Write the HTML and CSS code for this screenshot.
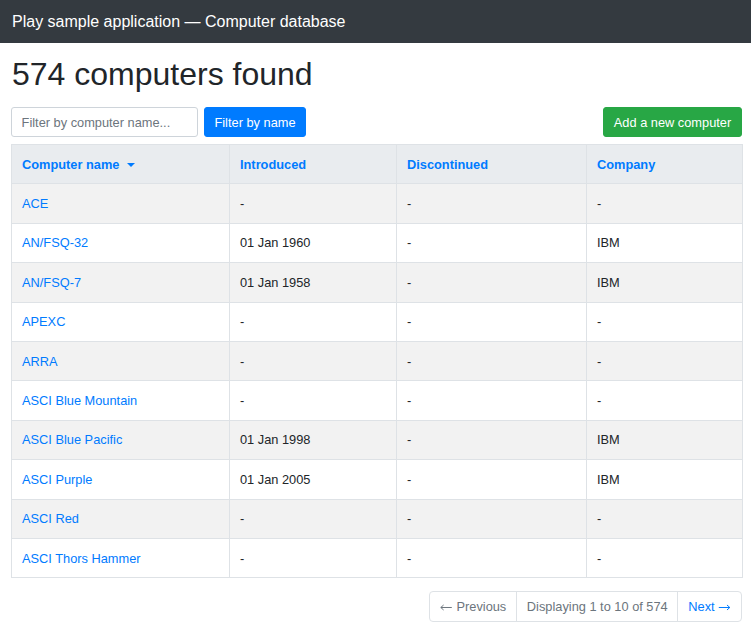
FILE: index.html
```html
<!DOCTYPE html>
<html lang="en">
<head>
<meta charset="utf-8">
<title>Computers database</title>
<link rel="stylesheet" href="styles.css">
</head>
<body>
<header class="topbar">
  <a class="brand" href="#">Play sample application — Computer database</a>
</header>
<main class="container">
  <h1 class="title">574 computers found</h1>
  <div class="actions">
    <form class="filter">
      <input class="search" type="search" placeholder="Filter by computer name...">
      <button class="btn btn-primary" type="button">Filter by name</button>
    </form>
    <a class="btn btn-success" href="#">Add a new computer</a>
  </div>
  <table class="computers">
    <colgroup>
      <col class="c1"><col class="c2"><col class="c3"><col class="c4">
    </colgroup>
    <thead>
      <tr>
        <th><a href="#">Computer name</a><span class="caret"></span></th>
        <th><a href="#">Introduced</a></th>
        <th><a href="#">Discontinued</a></th>
        <th><a href="#">Company</a></th>
      </tr>
    </thead>
    <tbody>
      <tr><td><a href="#">ACE</a></td><td>-</td><td>-</td><td>-</td></tr>
      <tr><td><a href="#">AN/FSQ-32</a></td><td>01 Jan 1960</td><td>-</td><td>IBM</td></tr>
      <tr><td><a href="#">AN/FSQ-7</a></td><td>01 Jan 1958</td><td>-</td><td>IBM</td></tr>
      <tr><td><a href="#">APEXC</a></td><td>-</td><td>-</td><td>-</td></tr>
      <tr><td><a href="#">ARRA</a></td><td>-</td><td>-</td><td>-</td></tr>
      <tr><td><a href="#">ASCI Blue Mountain</a></td><td>-</td><td>-</td><td>-</td></tr>
      <tr><td><a href="#">ASCI Blue Pacific</a></td><td>01 Jan 1998</td><td>-</td><td>IBM</td></tr>
      <tr><td><a href="#">ASCI Purple</a></td><td>01 Jan 2005</td><td>-</td><td>IBM</td></tr>
      <tr><td><a href="#">ASCI Red</a></td><td>-</td><td>-</td><td>-</td></tr>
      <tr><td><a href="#">ASCI Thors Hammer</a></td><td>-</td><td>-</td><td>-</td></tr>
    </tbody>
  </table>
  <nav class="pager">
    <ul class="pagination">
      <li class="page disabled"><span><svg class="arrow" viewBox="0 0 12.8 8" aria-hidden="true"><path d="M0.8 4.5H11.8M3.6 2L0.8 4.5L3.6 7"/></svg> Previous</span></li>
      <li class="page current"><span>Displaying 1 to 10 of 574</span></li>
      <li class="page"><a href="#">Next <svg class="arrow" viewBox="0 0 12.8 8" aria-hidden="true"><path d="M0.8 4.5H11.8M9 2L11.8 4.5L9 7"/></svg></a></li>
    </ul>
  </nav>
</main>
</body>
</html>
```
FILE: styles.css
```css
* { box-sizing: border-box; }
html, body { margin: 0; padding: 0; }
body {
  font-family: "Liberation Sans", Arial, sans-serif;
  font-size: 12.8px;
  line-height: 1.5;
  color: #212529;
  background: #fff;
}
a { color: #007bff; text-decoration: none; }

.topbar {
  height: 43px;
  background: #343a40;
  display: flex;
  align-items: center;
  padding: 0 12px;
}
.brand {
  color: #fff;
  font-size: 16px;
  line-height: 1.5;
}

.container {
  padding: 0 9px 0 11px;
}
.title {
  margin: 12px 0 0 1px;
  font-size: 32px;
  font-weight: 400;
  line-height: 1.2;
  height: 52px;
}
.actions {
  display: flex;
  justify-content: space-between;
  align-items: center;
  margin-bottom: 7px;
}
.filter {
  display: flex;
  gap: 6px;
  margin: 0;
}
.search {
  width: 187px;
  height: 30px;
  border: 1px solid #ced4da;
  border-radius: 3px;
  padding: 1px 9.6px 0;
  font: inherit;
  color: #495057;
  background: #fff;
}
.search::placeholder { color: #6c757d; opacity: 1; }
.btn {
  display: inline-block;
  height: 30px;
  padding: 5.2px 0 3.6px;
  border: 1px solid transparent;
  border-radius: 3px;
  font: inherit;
  line-height: 1.5;
  color: #fff;
  text-align: center;
  cursor: pointer;
}
.btn-primary { background: #007bff; border-color: #007bff; width: 102px; }
.btn-success { background: #28a745; border-color: #28a745; width: 139px; }

.computers {
  width: 731px;
  border-collapse: collapse;
  table-layout: fixed;
  border: 1px solid #dee2e6;
}
.c1 { width: 218px; }
.c2 { width: 167px; }
.c3 { width: 190px; }
.c4 { width: 156px; }
.computers th,
.computers td {
  border: 1px solid #dee2e6;
  padding: 9.6px 10px;
  text-align: left;
  vertical-align: top;
  height: 39.4px;
}
.computers th {
  background: #e9ecef;
  font-weight: 700;
}
.computers tbody tr:nth-child(odd) td { background: #f2f2f2; }
.caret {
  display: inline-block;
  width: 0;
  height: 0;
  margin-left: 8px;
  vertical-align: 2px;
  border-left: 4px solid transparent;
  border-right: 4px solid transparent;
  border-top: 4px solid #007bff;
}

.pager {
  display: flex;
  justify-content: flex-end;
  margin-top: 13px;
}
.pagination {
  display: flex;
  list-style: none;
  margin: 0;
  padding: 0;
  border: 1px solid #dee2e6;
  border-radius: 4px;
  height: 31px;
  overflow: hidden;
}
.page {
  padding: 4.9px 10px;
  line-height: 1.5;
}
.page + .page { border-left: 1px solid #dee2e6; }
.page.disabled, .page.current { color: #6c757d; }
.page.current { padding: 4.9px 9.6px; }
.arrow {
  width: 12.8px;
  height: 8px;
  vertical-align: 0;
  fill: none;
  stroke: currentColor;
  stroke-width: 1;
}
```
